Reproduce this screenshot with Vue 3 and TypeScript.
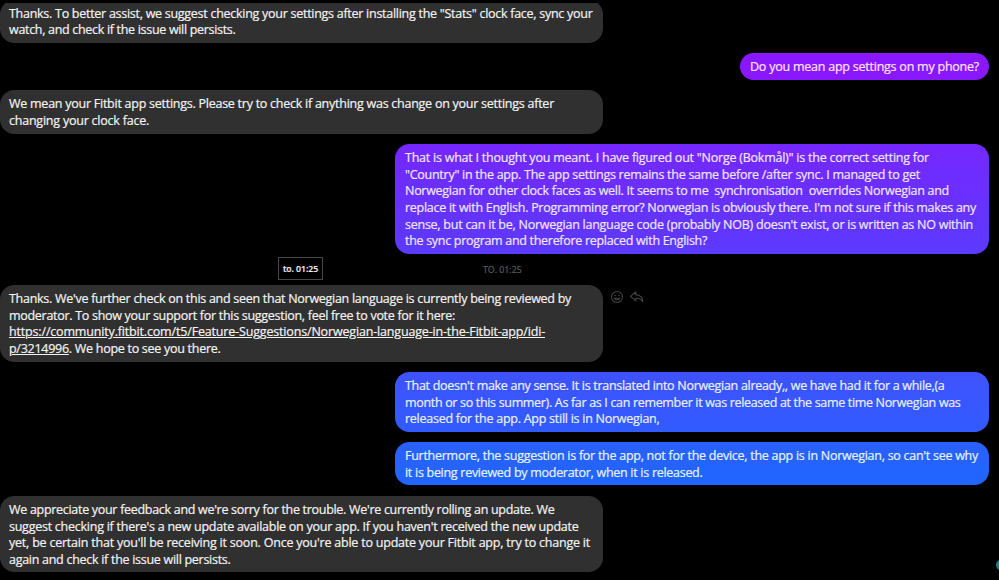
<template>
  <main class="chat" ref="refChat">
    <section v-for="(message, index) in messages" :key="index" class="group">
      <div v-if="message.time" class="time">
        {{ message.time }}
        <span class="tooltip">{{ message.tooltip }}</span>
      </div>
      <div class="row" :class="{ mine: message.mine }">
        <div class="bubble" :class="message.tone">
          <div v-for="(line, i) in message.lines" :key="i" class="line">
            <span class="text" :data-width="line.width"
              ><a v-if="line.link" class="link">{{ line.link }}</a
              >{{ line.text }}</span
            >
          </div>
        </div>
        <div v-if="message.actions" class="actions">
          <svg class="icon smile" viewBox="0 0 14 14">
            <circle cx="7" cy="7" r="5.5" />
            <path d="M4.3 8.3c.6 1.2 1.6 1.7 2.7 1.7s2.1-.5 2.7-1.7z" />
            <circle class="eye" cx="5" cy="5.5" r=".8" />
            <circle class="eye" cx="9" cy="5.5" r=".8" />
          </svg>
          <svg class="icon" viewBox="0 0 16 14">
            <path d="M6.8 1.8 1.5 6.3l5.3 4.5V8.2c3.5-.2 5.6.9 7 3.5.2-3.8-2.5-6.9-7-7.1z" />
          </svg>
        </div>
      </div>
    </section>
    <i class="edge"></i>
  </main>
</template>

<script setup lang="ts">
import { onMounted, ref } from 'vue'

interface Line {
  text: string
  width: number
  link?: string
}

interface Message {
  lines: Line[]
  tone?: string
  mine?: boolean
  time?: string
  tooltip?: string
  actions?: boolean
}

const refChat = ref<HTMLElement>()

const messages: Message[] = [
  {
    lines: [
      { text: 'Thanks. To better assist, we suggest checking your settings after installing the "Stats" clock face, sync your', width: 583.5 },
      { text: 'watch, and check if the issue will persists.', width: 226.5 }
    ]
  },
  {
    mine: true,
    tone: 'violet',
    lines: [{ text: 'Do you mean app settings on my phone?', width: 229 }]
  },
  {
    lines: [
      { text: 'We mean your Fitbit app settings. Please try to check if anything was change on your settings after', width: 545 },
      { text: 'changing your clock face.', width: 140 }
    ]
  },
  {
    mine: true,
    tone: 'purple',
    lines: [
      { text: 'That is what I thought you meant. I have figured out "Norge (Bokmål)" is the correct setting for', width: 524 },
      { text: '"Country" in the app. The app settings remains the same before /after sync. I managed to get', width: 515 },
      { text: 'Norwegian for other clock faces as well. It seems to me  synchronisation  overrides Norwegian and', width: 544 },
      { text: 'replace it with English. Programming error? Norwegian is obviously there. I\'m not sure if this makes any', width: 571 },
      { text: 'sense, but can it be, Norwegian language code (probably NOB) doesn\'t exist, or is written as NO within', width: 568 },
      { text: 'the sync program and therefore replaced with English?', width: 302 }
    ]
  },
  {
    time: 'TO. 01:25',
    tooltip: 'to. 01:25',
    actions: true,
    lines: [
      { text: 'Thanks. We\'ve further check on this and seen that Norwegian language is currently being reviewed by', width: 562 },
      { text: 'moderator. To show your support for this suggestion, feel free to vote for it here:', width: 446 },
      { link: 'https://community.fitbit.com/t5/Feature-Suggestions/Norwegian-language-in-the-Fitbit-app/idi-', text: '', width: 536 },
      { link: 'p/3214996', text: '. We hope to see you there.', width: 211.5 }
    ]
  },
  {
    mine: true,
    tone: 'indigo',
    lines: [
      { text: 'That doesn\'t make any sense. It is translated into Norwegian already,, we have had it for a while,(a', width: 539.5 },
      { text: 'month or so this summer). As far as I can remember it was released at the same time Norwegian was', width: 555.5 },
      { text: 'released for the app. App still is in Norwegian,', width: 254.5 }
    ]
  },
  {
    mine: true,
    tone: 'blue',
    lines: [
      { text: 'Furthermore, the suggestion is for the app, not for the device, the app is in Norwegian, so can\'t see why', width: 573 },
      { text: 'it is being reviewed by moderator, when it is released.', width: 297.5 }
    ]
  },
  {
    lines: [
      { text: 'We appreciate your feedback and we\'re sorry for the trouble. We\'re currently rolling an update. We', width: 545.5 },
      { text: 'suggest checking if there\'s a new update available on your app. If you haven\'t received the new update', width: 569.5 },
      { text: 'yet, be certain that you\'ll be receiving it soon. Once you\'re able to update your Fitbit app, try to change it', width: 581 },
      { text: 'again and check if the issue will persists.', width: 221.5 }
    ]
  }
]

// spread the letters so every line keeps its measure
onMounted(() => {
  refChat.value?.querySelectorAll<HTMLElement>('.text').forEach((el) => {
    const count = (el.textContent || '').length
    const gap = Number(el.dataset.width) - el.getBoundingClientRect().width
    el.style.letterSpacing = `${gap / count}px`
  })
})
</script>

<style>
body {
  margin: 0;
  background: #000;
}
</style>

<style scoped>
.chat {
  position: relative;
  box-sizing: border-box;
  width: 999px;
  height: 580px;
  overflow: hidden;
  background: #000;
  border-top: 3px solid #000;
  color: #f3f3f3;
  font-family: 'Open Sans', 'Noto Sans', sans-serif;
  font-size: 12.5px;
  line-height: 16.67px;
  -webkit-text-stroke: 0.2px currentColor;
}
.group {
  margin-bottom: 10.35px;
}
.group:first-child {
  margin-top: -3.4px;
}
.row {
  display: flex;
}
.row.mine {
  justify-content: flex-end;
  padding-right: 10px;
}
.bubble {
  box-sizing: border-box;
  width: 603px;
  padding: 6.2px 9px 3.8px;
  border-radius: 14.5px;
  background: #303030;
}
.mine .bubble {
  width: 594px;
  padding: 6.2px 10px 3.8px;
}
.mine .violet {
  width: 249px;
  background: #8a18ff;
  color: #fbe3ff;
}
.mine .purple {
  background: linear-gradient(#7527ff, #5c3aff);
  color: #f0e6ff;
}
.mine .indigo {
  background: linear-gradient(#3f52ff, #315bff);
  color: #e9f0ff;
}
.mine .blue {
  background: linear-gradient(#2a60ff, #2066ff);
  color: #e5f3ff;
}
.line {
  height: 16.67px;
  white-space: pre;
}
.link {
  text-decoration: underline;
}
.time {
  position: relative;
  height: 20.8px;
  padding-left: 483px;
  line-height: 13px;
  color: #5c5c5c;
  font-size: 8.8px;
}
.tooltip {
  position: absolute;
  left: 278px;
  top: -7px;
  box-sizing: border-box;
  width: 45px;
  height: 23px;
  border: 1px solid #484848;
  color: #eee;
  font-size: 8.6px;
  font-weight: 600;
  line-height: 22px;
  text-align: center;
}
.actions {
  display: flex;
  gap: 5px;
  padding: 5px 0 0 7px;
}
.icon {
  width: 16px;
  height: 14px;
  fill: none;
  stroke: #464646;
  stroke-width: 1.1;
  stroke-linejoin: round;
}
.icon.smile {
  width: 14px;
}
.icon .eye {
  fill: #464646;
  stroke: none;
}
.edge {
  position: absolute;
  right: -5px;
  bottom: 10px;
  width: 8px;
  height: 10px;
  border-radius: 50%;
  background: #14808a;
}
</style>
